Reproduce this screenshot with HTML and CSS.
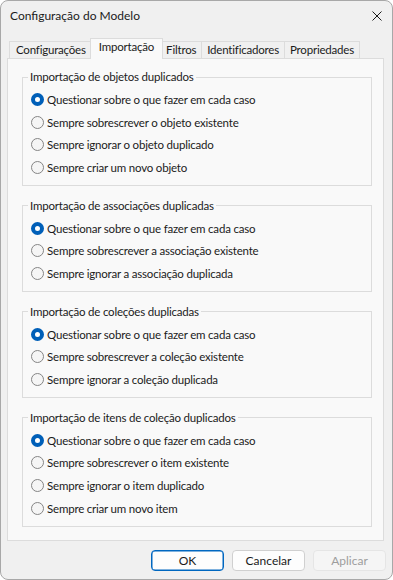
FILE: index.html
```html
<!DOCTYPE html>
<html lang="pt-BR">
<head>
  <meta charset="UTF-8" />
  <meta name="viewport" content="width=device-width, initial-scale=1.0"/>
  <title>Configuração do Modelo</title>
  <link rel="stylesheet" href="styles.css">
</head>
<body>
  <div class="window">
    <div class="titlebar">
      <span class="title">Configuração do Modelo</span>
      <button class="close-btn" aria-label="Fechar">
        <svg width="10" height="10" viewBox="0 0 10 10">
          <path d="M0.5 0.5 L9.5 9.5 M9.5 0.5 L0.5 9.5" stroke="#1b1b1b" stroke-width="1" fill="none"/>
        </svg>
      </button>
    </div>

    <div class="tabs">
      <div class="tab">Configurações</div>
      <div class="tab active">Importação</div>
      <div class="tab">Filtros</div>
      <div class="tab">Identificadores</div>
      <div class="tab">Propriedades</div>
    </div>

    <div class="panel">
      <fieldset class="group">
        <legend>Importação de objetos duplicados</legend>
        <label class="option"><input type="radio" name="obj" checked><span>Questionar sobre o que fazer em cada caso</span></label>
        <label class="option"><input type="radio" name="obj"><span>Sempre sobrescrever o objeto existente</span></label>
        <label class="option"><input type="radio" name="obj"><span>Sempre ignorar o objeto duplicado</span></label>
        <label class="option"><input type="radio" name="obj"><span>Sempre criar um novo objeto</span></label>
      </fieldset>

      <fieldset class="group">
        <legend>Importação de associações duplicadas</legend>
        <label class="option"><input type="radio" name="assoc" checked><span>Questionar sobre o que fazer em cada caso</span></label>
        <label class="option"><input type="radio" name="assoc"><span>Sempre sobrescrever a associação existente</span></label>
        <label class="option"><input type="radio" name="assoc"><span>Sempre ignorar a associação duplicada</span></label>
      </fieldset>

      <fieldset class="group">
        <legend>Importação de coleções duplicadas</legend>
        <label class="option"><input type="radio" name="col" checked><span>Questionar sobre o que fazer em cada caso</span></label>
        <label class="option"><input type="radio" name="col"><span>Sempre sobrescrever a coleção existente</span></label>
        <label class="option"><input type="radio" name="col"><span>Sempre ignorar a coleção duplicada</span></label>
      </fieldset>

      <fieldset class="group">
        <legend>Importação de itens de coleção duplicados</legend>
        <label class="option"><input type="radio" name="item" checked><span>Questionar sobre o que fazer em cada caso</span></label>
        <label class="option"><input type="radio" name="item"><span>Sempre sobrescrever o item existente</span></label>
        <label class="option"><input type="radio" name="item"><span>Sempre ignorar o item duplicado</span></label>
        <label class="option"><input type="radio" name="item"><span>Sempre criar um novo item</span></label>
      </fieldset>
    </div>

    <div class="footer">
      <button class="btn default">OK</button>
      <button class="btn">Cancelar</button>
      <button class="btn" disabled>Aplicar</button>
    </div>
  </div>
</body>
</html>
```

FILE: styles.css
```css
:root {
  --window-bg: #f0f0f0;
  --panel-bg: #f9f9f9;
  --line: #dcdcdc;
  --text: #1b1b1b;
  --accent: #005fb8;
  --font-family: Lato, 'Noto Sans', sans-serif;
}

* {
  box-sizing: border-box;
}

body {
  margin: 0;
  background: #ffffff;
  font-family: var(--font-family);
  font-size: 11.5px;
  letter-spacing: -0.2px;
  color: var(--text);
}

.window {
  width: 393px;
  height: 580px;
  border: 1px solid #a8a8a8;
  border-radius: 8px;
  background-color: var(--window-bg);
  overflow: hidden;
}

.titlebar {
  height: 29px;
  display: flex;
  align-items: center;
  justify-content: space-between;
  padding-left: 9px;
}

.title {
  font-size: 12px;
  letter-spacing: 0;
}

.close-btn {
  width: 30px;
  height: 29px;
  border: none;
  background: transparent;
  padding: 0;
  display: flex;
  align-items: center;
  justify-content: center;
}

.tabs {
  display: flex;
  align-items: flex-end;
  height: 21px;
  margin-top: 8px;
  padding-left: 8px;
  position: relative;
  z-index: 1;
}

.tab {
  height: 17px;
  line-height: 15px;
  margin-bottom: 1px;
  padding: 0 5px;
  border: 1px solid var(--line);
  border-bottom: none;
  margin-left: -1px;
  background-color: var(--window-bg);
  white-space: nowrap;
}

.tab:first-child {
  margin-left: 0;
  padding-left: 6px;
}

.tab.active {
  height: 21px;
  line-height: 16px;
  margin-bottom: 0;
  margin-left: -2px;
  margin-right: -2px;
  padding: 0 8px;
  background-color: var(--panel-bg);
  position: relative;
  z-index: 2;
}

.panel {
  margin: -1px 8px 0 6px;
  height: 483px;
  border: 1px solid var(--line);
  background-color: var(--panel-bg);
  padding: 10px 11px 0 14px;
  display: flex;
  flex-direction: column;
  gap: 12px;
}

.group {
  margin: 0;
  border: 1px solid var(--line);
  padding: 3px 8px 6px 8px;
  display: flex;
  flex-direction: column;
}

.group legend {
  padding: 0 2px;
  margin-left: -3px;
  line-height: 16px;
}

.option {
  display: flex;
  align-items: center;
  height: 22.7px;
  white-space: nowrap;
}

.option input {
  appearance: none;
  -webkit-appearance: none;
  width: 13px;
  height: 13px;
  margin: 0 3px 0 0;
  border: 1px solid #858585;
  border-radius: 50%;
  background-color: #f5f5f5;
  flex-shrink: 0;
}

.option input:checked {
  border: 4px solid var(--accent);
  background-color: #ffffff;
}

.footer {
  display: flex;
  justify-content: flex-end;
  gap: 8px;
  padding: 9px 6px 0 0;
}

.btn {
  width: 73px;
  height: 21px;
  padding: 0;
  font-family: var(--font-family);
  font-size: 12px;
  color: var(--text);
  background-color: #fdfdfd;
  border: 1px solid #d0d0d0;
  border-radius: 4px;
}

.btn.default {
  border-color: #0067c0;
  box-shadow: inset 0 0 0 0.5px #0067c0;
}

.btn:disabled {
  color: #9d9d9d;
  background-color: #f5f5f5;
  border-color: #e5e5e5;
}
```
